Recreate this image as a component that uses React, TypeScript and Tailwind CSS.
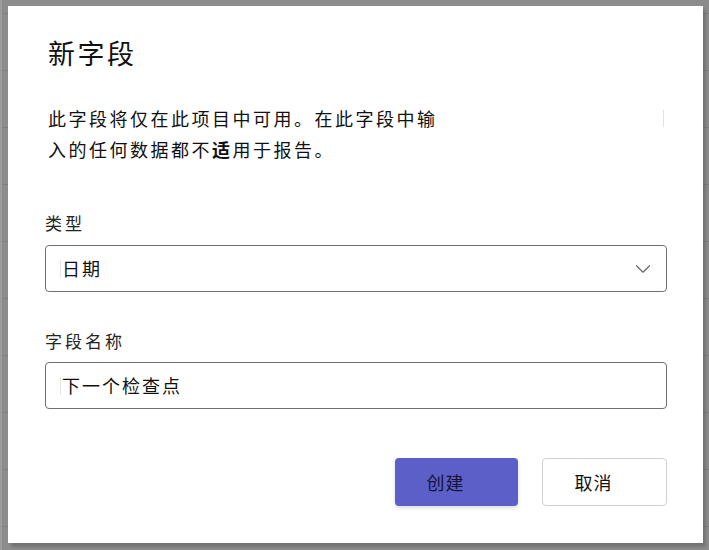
import { ChevronDown } from "lucide-react"

const cjk = "font-['Noto_Sans_CJK_SC','Noto_Sans',sans-serif]"

export default function App() {
  return (
    <div
      className={`h-[550px] w-[709px] border-l-2 border-[#9c9c9c] bg-[#8c8c8c] bg-[repeating-linear-gradient(to_bottom,#8c8c8c_0px,#8c8c8c_13px,#808080_13px,#808080_14px,#8c8c8c_14px,#8c8c8c_57px)] pl-[6px] pt-[6px] ${cjk}`}
    >
      {/* Dialog */}
      <div className="flex h-[537px] w-[695px] flex-col bg-white pl-[37px] pr-[36px] pt-[29px] shadow-[3px_4px_3px_rgba(0,0,0,0.18)]">
        <h1 className="ml-[3px] text-[27px] leading-[36px] tracking-[2.5px] text-[#111]">
          新字段
        </h1>

        {/* Description */}
        <div className="mt-[32px] flex items-start justify-between">
          <p className="ml-[3px] text-[18px] leading-[31px] tracking-[2.5px] text-[#111]">
            此字段将仅在此项目中可用。在此字段中输
            <br />
            入的任何数据都不<span className="font-bold">适</span>用于报告。
          </p>
          <span className="mr-[3px] mt-[7px] h-[17px] w-px bg-[#e3e3e3]" />
        </div>

        {/* Type */}
        <label className="mt-[46px] text-[17px] leading-[24px] tracking-[3px] text-[#242424]">
          类型
        </label>
        <div className="mt-[10px] flex h-[47px] items-center justify-between rounded-[4px] border border-[#707070] pl-[14px] pr-[10px]">
          <div className="flex items-center gap-[1px]">
            <span className="h-[18px] w-px bg-[#e6e6e6]" />
            <span className="text-[18px] tracking-[2px] text-[#111]">日期</span>
          </div>
          <ChevronDown size={26} strokeWidth={1} className="text-[#616161]" />
        </div>

        {/* Field name */}
        <label className="mt-[37px] text-[17px] leading-[24px] tracking-[3px] text-[#242424]">
          字段名称
        </label>
        <div className="mt-[9px] flex h-[47px] items-center gap-[1px] rounded-[4px] border border-[#707070] pl-[14px]">
          <span className="h-[18px] w-px bg-[#e6e6e6]" />
          <span className="text-[18px] tracking-[2px] text-[#111]">下一个检查点</span>
        </div>

        {/* Actions */}
        <div className="mt-[49px] flex justify-end gap-[24px]">
          <button className="flex h-[48px] w-[123px] items-center justify-center rounded-[4px] bg-[#5b5fc7] pr-[22px] text-[18px] tracking-[1px] text-[#14143a] shadow-[0_2px_4px_rgba(0,0,0,0.14)]">
            创建
          </button>
          <button className="flex h-[48px] w-[125px] items-center justify-center rounded-[4px] border border-[#d1d1d1] bg-white pr-[22px] text-[18px] tracking-[1px] text-[#111]">
            取消
          </button>
        </div>
      </div>
    </div>
  )
}
